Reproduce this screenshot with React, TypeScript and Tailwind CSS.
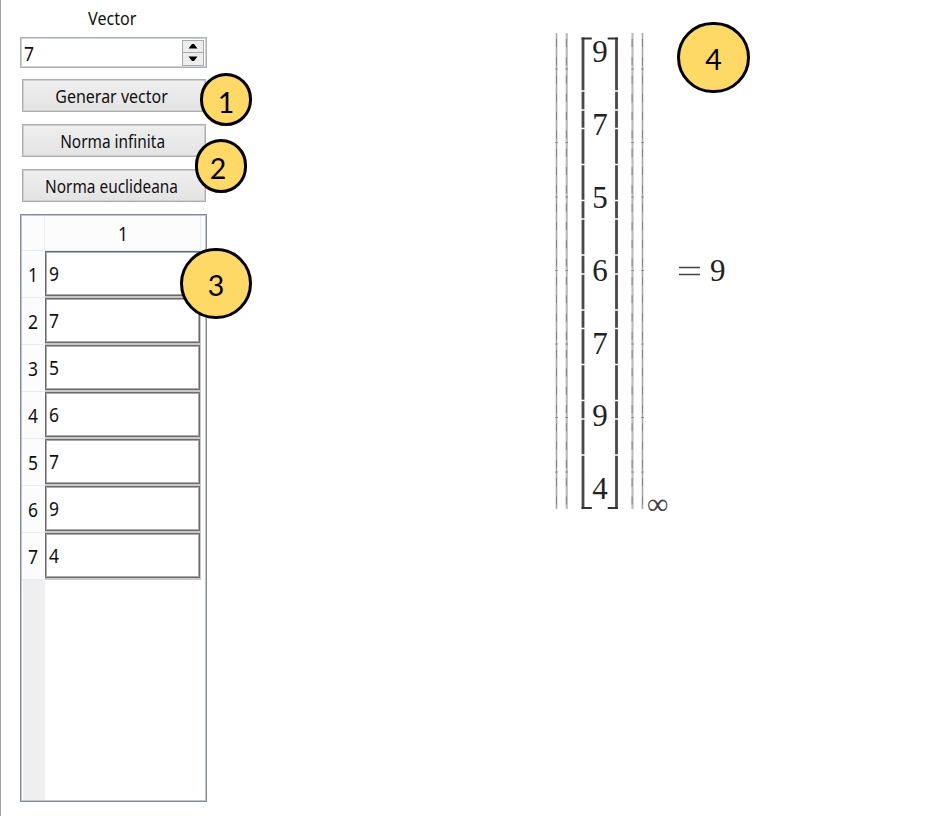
import React from "react";

const values = [9, 7, 5, 6, 7, 9, 4];
const uiFont = "font-['Noto_Sans',sans-serif]";
const gaps = [91, 110, 128.5, 164.5, 200.5, 219, 255, 274, 310, 328.5, 364.5, 400.5, 419, 455];
const normDots = [69, 142.5, 197, 270.5, 344, 417.5, 472];

function Button({ label, fit }: { label: string; fit: string }) {
  return (
    <button className="flex h-[33px] w-[184px] shrink-0 items-center justify-center whitespace-nowrap border border-[#adadad] bg-linear-to-b from-[#efefef] to-[#e3e3e3] pt-[2px] text-[17.5px] leading-none text-[#111] shadow-[inset_0_0_0_1px_#cfcfcf]">
      <span className={fit}>{label}</span>
    </button>
  );
}

function Digit({ n }: { n: number }) {
  return <span className="inline-block origin-left scale-x-[0.92] text-[19px] leading-none">{n}</span>;
}

function Callout({ n, place }: { n: number; place: string }) {
  return (
    <div
      className={`absolute flex items-center justify-center rounded-full border-[3px] border-black bg-[#ffd966] font-['Lato',sans-serif] text-[28.5px] leading-none text-black ${place}`}
    >
      {n}
    </div>
  );
}

function Delimiters() {
  return (
    <svg className="absolute inset-0" width="94" height="480" viewBox="553 32 94 480" fill="none">
      {[556.5, 566.75, 632.5, 642.5].map((x, i) => (
        <g key={x}>
          <path
            d={`M${x} 33V509`}
            stroke={i === 1 || i === 2 ? "#bcbcbc" : "#a8a8a8"}
            strokeWidth={i === 1 || i === 2 ? 2.2 : 1.6}
          />
          <path
            d={`M${i === 1 || i === 2 ? x - 0.4 : x} 39V509`}
            stroke="#858585"
            strokeWidth="1"
            strokeDasharray="8 10.3"
          />
          {normDots.map((y) => (
            <path key={y} d={`M${x - 1.2} ${y}h2.4`} stroke="#7c7c7c" strokeWidth="1" />
          ))}
        </g>
      ))}
      <path d="M583 37.500V509M616.500 37.500V509" stroke="#484848" strokeWidth="2.800" />
      <path d="M581.600 38.500H591.800M617.900 38.500H607.700M581.600 508H591.800M617.900 508H607.700" stroke="#333" strokeWidth="2" />
      {gaps.map((y) => (
        <path key={y} d={`M580 ${y}h40`} stroke="#fff" strokeWidth="1.3" />
      ))}
    </svg>
  );
}

export default function App() {
  return (
    <div className="relative flex h-[816px] w-[931px] overflow-hidden bg-white">
      <aside className={`flex h-full w-[208px] shrink-0 flex-col border-l border-[#a2a2a2] pl-[19px] text-[#111] ${uiFont}`}>
        <div className="flex h-[37px] w-[187px] shrink-0 items-center justify-center pt-px pr-[3px] text-[17.5px] leading-none">
          <span className="scale-x-[0.92]">Vector</span>
        </div>
        <div className="flex h-[31px] w-[187px] shrink-0 items-center justify-between border border-[#adb0b8] bg-white pr-[2px] pl-[3px] shadow-[inset_0_0_0_1px_#d0d2d8]">
          <span className="pt-[5px]"><Digit n={7} /></span>
          <div className="flex h-[26px] w-[22px] flex-col border border-[#aaa] bg-[#ededed]">
            <div className="flex flex-1 items-center justify-center border-b border-[#aaa]">
              <svg width="10" height="6" viewBox="0 0 10 6"><path d="M.5 5.500 4 1h2l3.500 4.500z" fill="#000" /></svg>
            </div>
            <div className="flex flex-1 items-center justify-center">
              <svg width="10" height="6" viewBox="0 0 10 6"><path d="M.5.500 4 5h2L9.500.5z" fill="#000" /></svg>
            </div>
          </div>
        </div>
        <div className="mt-[11px] flex w-[187px] flex-col items-center gap-3">
          <Button label="Generar vector" fit="scale-x-[0.915] -ml-[3px]" />
          <Button label="Norma infinita" fit="scale-x-[0.88] -ml-[2px]" />
          <Button label="Norma euclideana" fit="scale-x-[0.88] -ml-[4px]" />
        </div>
        <div className="mt-3 flex h-[588px] w-[187px] flex-col border border-[#858a97] bg-white p-px shadow-[inset_0_0_0_1px_#bfc4ce]">
          <div className="flex h-[35px] shrink-0 border-b border-[#e4edf8] bg-[#fcfcfc]">
            <div className="w-[23px] border-r border-[#e4edf8]" />
            <div className="flex w-[156px] items-center justify-center border-r border-[#e4edf8] pt-[2px] pl-[2px]"><Digit n={1} /></div>
          </div>
          {values.map((v, i) => (
            <div key={i} className="flex h-[47px] shrink-0">
              <div className="flex w-[23px] items-center justify-center border-b border-[#e4edf8] bg-[#fcfcfc] pt-[2px]"><Digit n={i + 1} /></div>
              <div className="h-[47px] w-[156px] border-r border-b-2 border-[#c8c8c8]">
                <div className="flex h-[45px] items-center border border-[#6c6c6c] bg-white pt-[2px] pl-[3px] shadow-[inset_0_0_0_1px_#aaa]"><Digit n={v} /></div>
              </div>
            </div>
          ))}
          <div className="ml-[1px] w-[22px] flex-1 bg-[#efefef]" />
        </div>
      </aside>

      <main className="flex flex-1 items-start pt-[32px] pl-[345px] font-['Liberation_Serif',serif] text-[#222]">
        <div className="relative flex h-[480px] w-[94px] flex-col items-center">
          <Delimiters />
          {values.map((v, i) => (
            <span key={i} className="relative -mt-[16.5px] mb-[16.5px] flex h-[72.8px] shrink-0 items-center justify-center text-[31px] leading-none">
              {v}
            </span>
          ))}
        </div>
        <span className="mt-[457px] w-[24px] text-[30px] leading-none text-[#444]">∞</span>
        <div className="mt-[223px] ml-[8px] flex items-center gap-[10px] text-[31px] leading-none">
          <svg width="21" height="10" viewBox="0 0 21 10"><path d="M0 1.500H21M0 8.500H21" stroke="#444" strokeWidth="1.300" /></svg>
          <span>9</span>
        </div>
      </main>

      <Callout n={1} place="left-[200px] top-[73px] h-[53px] w-[52px] pt-[5px]" />
      <Callout n={2} place="left-[195px] top-[139px] h-[54px] w-[52px] pr-[6px] pt-[5px]" />
      <Callout n={3} place="left-[180px] top-[248px] h-[71px] w-[72px] pt-[4px]" />
      <Callout n={4} place="left-[677px] top-[22px] h-[71px] w-[73px] pt-[4px]" />
    </div>
  );
}
